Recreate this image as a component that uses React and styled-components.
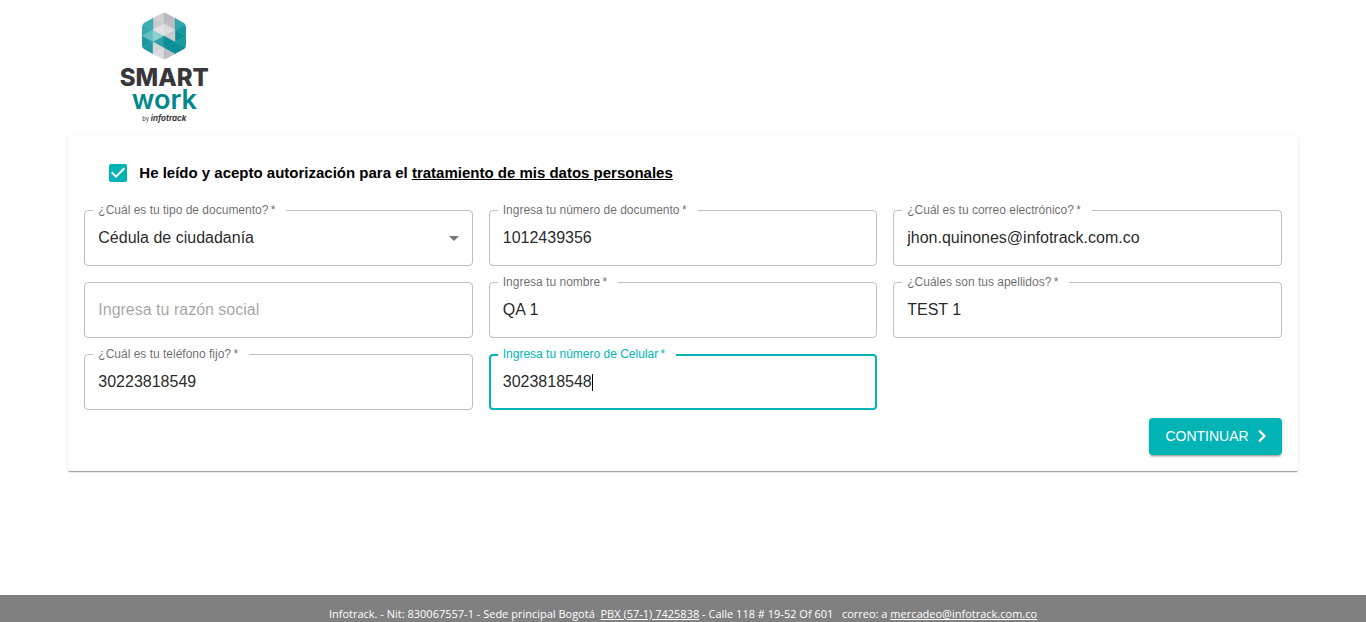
import React from 'react';
import styled, { createGlobalStyle } from 'styled-components';

const TEAL = '#00b4b6';
const INK = 'rgba(0, 0, 0, 0.87)';
const SANS = '"Liberation Sans", Arial, sans-serif';

const GlobalStyle = createGlobalStyle`
  *, *::before, *::after { box-sizing: border-box; }
  body { margin: 0; background: #fff; color: #000; font-family: ${SANS}; }
`;

const Page = styled.div`
  min-height: 100vh;
  display: flex;
  flex-direction: column;
`;

const Header = styled.header`
  width: 90%;
  margin: 0 auto;
  padding: 12px 52px;
  display: flex;
`;

const Brand = styled.div`
  display: flex;
  flex-direction: column;
  align-items: center;
  width: 88px;
  font-family: Inter, sans-serif;
`;

const BrandSmart = styled.span`
  margin-top: 6px;
  font-size: 24px;
  line-height: 24px;
  font-weight: 800;
  color: #38363b;
`;

const BrandWork = styled.span`
  font-size: 27px;
  line-height: 20px;
  font-weight: 600;
  color: #00888c;
`;

const BrandBy = styled.span`
  margin-top: 3px;
  font-size: 6px;
  line-height: 10px;
  color: #38363b;

  em {
    font-size: 8px;
    font-weight: 700;
  }
`;

const Card = styled.form`
  width: 90%;
  margin: 0 auto 32px;
  padding: 16px;
  border-radius: 1px;
  background: #fff;
  box-shadow: 0 2px 1px -1px rgba(0, 0, 0, 0.2), 0 1px 1px rgba(0, 0, 0, 0.14),
    0 1px 3px rgba(0, 0, 0, 0.12);
`;

const Consent = styled.div`
  display: flex;
  align-items: center;
  gap: 12px;
  height: 42px;
  padding-left: 25px;
  margin-bottom: 16px;
  font-size: 15px;
  line-height: 24px;
  font-weight: 700;
`;

const TickBox = styled.span`
  display: grid;
  width: 18px;
  height: 18px;

  > * {
    grid-area: 1 / 1;
  }

  input {
    appearance: none;
    width: 18px;
    height: 18px;
    margin: 0;
    border: 2px solid #757575;
    border-radius: 2px;
  }

  input:checked {
    border-color: ${TEAL};
    background: ${TEAL};
  }

  svg {
    pointer-events: none;
  }
`;

const TextLink = styled.a`
  color: inherit;
  text-decoration: underline;
`;

const Fields = styled.div`
  display: grid;
  grid-template-columns: repeat(3, minmax(0, 1fr));
  gap: 16px;
`;

const Outline = styled.fieldset`
  display: flex;
  min-width: 0;
  height: 56px;
  margin: 0;
  padding: 0 8px;
  border: 1px solid rgba(0, 0, 0, 0.25);
  border-radius: 4px;

  &:focus-within {
    padding: 0 7px;
    border: 2px solid ${TEAL};
  }
`;

const Legend = styled.legend`
  height: 1px;
  padding: 0 11px 0 5px;
  font-size: 12px;
  line-height: 1px;
  color: rgba(0, 0, 0, 0.6);
  white-space: nowrap;

  ${Outline}:focus-within & {
    height: 2px;
    color: ${TEAL};
  }
`;

const Control = styled.div`
  flex: 1;
  display: flex;
  align-items: center;
  min-width: 0;
  padding: 0 5px;

  input,
  select {
    flex: 1;
    min-width: 0;
    padding: 0;
    border: 0;
    outline: 0;
    appearance: none;
    background: transparent;
    color: ${INK};
    font: 16px/24px ${SANS};
  }

  input:focus {
    flex: none;
    field-sizing: content;
    caret-color: transparent;
  }

  input::placeholder {
    color: rgba(0, 0, 0, 0.38);
    opacity: 1;
  }
`;

const Caret = styled.span`
  display: none;
  width: 1px;
  height: 17px;
  background: #000;

  input:focus + & {
    display: block;
  }
`;

const Actions = styled.div`
  display: flex;
  justify-content: flex-end;
  margin-top: 8px;
`;

const SubmitButton = styled.button`
  display: flex;
  align-items: center;
  gap: 5px;
  padding: 6px 12px 7px 16px;
  border: 0;
  border-radius: 4px;
  background: ${TEAL};
  color: #fff;
  font: 14px/24px ${SANS};
  text-transform: uppercase;
  box-shadow: 0 3px 1px -2px rgba(0, 0, 0, 0.2), 0 2px 2px rgba(0, 0, 0, 0.14),
    0 1px 5px rgba(0, 0, 0, 0.12);
`;

const Footer = styled.footer`
  margin-top: auto;
  padding: 11px 16px 0;
  background: #808080;
  color: #fff;
  font-family: "Open Sans", sans-serif;
  font-size: 11px;
  line-height: 16px;
  text-align: center;
  white-space: pre-wrap;
`;

const facets = [
  ['#d0d0d4', '22,0 11,6 22,12'],
  ['#b8b8be', '22,0 33,6 22,12'],
  ['#cbcbd0', '11,6 22,12 11,18'],
  ['#bdbdc3', '33,6 22,12 33,18'],
  ['#3fadb3', '0,12 11,6 11,18'],
  ['#35a5ac', '44,12 33,6 33,18'],
  ['#38a8af', '0,12 11,18 0,24'],
  ['#1b99a1', '44,12 33,18 44,24'],
  ['#e3e3e6', '22,12 11,18 22,24'],
  ['#dadade', '22,12 33,18 22,24'],
  ['#66bfc3', '0,24 11,18 11,30'],
  ['#0a8f98', '44,24 33,18 33,30'],
  ['#8fcfd2', '11,18 22,24 11,30'],
  ['#c9c9ce', '33,18 22,24 33,30'],
  ['#1b99a1', '0,24 11,30 0,36'],
  ['#1b99a1', '44,24 33,30 44,36'],
  ['#2a9fa6', '22,24 11,30 22,36'],
  ['#0a8f98', '22,24 33,30 22,36'],
  ['#1b99a1', '0,36 11,30 11,42'],
  ['#0a8f98', '44,36 33,30 33,42'],
  ['#d4d4d8', '11,30 22,36 11,42'],
  ['#0a8f98', '33,30 22,36 33,42'],
  ['#dcdce0', '22,36 11,42 22,48'],
  ['#bdbdc3', '22,36 33,42 22,48'],
];

function Hexagon() {
  return (
    <svg width="44" height="48" viewBox="0 0 44 48" aria-hidden="true">
      <clipPath id="hex">
        <path d="M19 1.6Q22 0 25 1.6L41 10.3Q44 12 44 15V33Q44 36 41 37.7L25 46.4Q22 48 19 46.4L3 37.7Q0 36 0 33V15Q0 12 3 10.3Z" />
      </clipPath>
      <g clipPath="url(#hex)">
        {facets.map(([fill, points]) => (
          <polygon key={points} fill={fill} stroke={fill} strokeWidth="0.4" points={points} />
        ))}
      </g>
    </svg>
  );
}

const DropArrow = styled.svg`
  flex: none;
  margin-right: -7px;
  pointer-events: none;
`;

function Field({ id, label, required, children }) {
  return (
    <Outline>
      {label && (
        <Legend>
          <label htmlFor={id}>
            {label}
            {required && '\u2009*'}
          </label>
        </Legend>
      )}
      <Control>{children}</Control>
    </Outline>
  );
}

export default function App() {
  return (
    <Page>
      <GlobalStyle />
      <Header>
        <Brand>
          <Hexagon />
          <BrandSmart>SMART</BrandSmart>
          <BrandWork>work</BrandWork>
          <BrandBy>by <em>infotrack</em></BrandBy>
        </Brand>
      </Header>
      <Card>
        <Consent>
          <TickBox>
            <input id="consent" type="checkbox" defaultChecked />
            <svg width="18" height="18" viewBox="3 3 18 18" aria-hidden="true">
              <path fill="#fff" d="M10 17l-5-5 1.41-1.41L10 14.17l7.59-7.59L19 8l-9 9z" />
            </svg>
          </TickBox>
          <label htmlFor="consent">
            He leído y acepto autorización para el{' '}
            <TextLink href="#datos">tratamiento de mis datos personales</TextLink>
          </label>
        </Consent>
        <Fields>
          <Field id="tipo" label="¿Cuál es tu tipo de documento?" required>
            <select id="tipo"><option>Cédula de ciudadanía</option></select>
            <DropArrow width="24" height="24" viewBox="0 0 24 24" aria-hidden="true">
              <path d="M7 10l5 5 5-5z" fill="#757575" />
            </DropArrow>
          </Field>
          <Field id="doc" label="Ingresa tu número de documento" required>
            <input id="doc" defaultValue="1012439356" />
          </Field>
          <Field id="correo" label="¿Cuál es tu correo electrónico?" required>
            <input id="correo" type="email" defaultValue="jhon.quinones@infotrack.com.co" />
          </Field>
          <Field id="razon">
            <input id="razon" aria-label="Ingresa tu razón social" placeholder="Ingresa tu razón social" />
          </Field>
          <Field id="nombre" label="Ingresa tu nombre" required>
            <input id="nombre" defaultValue="QA 1" />
          </Field>
          <Field id="apellidos" label="¿Cuáles son tus apellidos?" required>
            <input id="apellidos" defaultValue="TEST 1" />
          </Field>
          <Field id="fijo" label="¿Cuál es tu teléfono fijo?" required>
            <input id="fijo" type="tel" defaultValue="30223818549" />
          </Field>
          <Field id="celular" label="Ingresa tu número de Celular" required>
            <input id="celular" type="tel" defaultValue="3023818548" autoFocus />
            <Caret />
          </Field>
        </Fields>
        <Actions>
          <SubmitButton type="button">
            Continuar
            <svg width="16" height="16" viewBox="0 0 16 16" aria-hidden="true">
              <path d="M5 2.5l5.5 5.5L5 13.5" fill="none" stroke="#fff" strokeWidth="2.2" />
            </svg>
          </SubmitButton>
        </Actions>
      </Card>
      <Footer>
        Infotrack. - Nit: 830067557-1 - Sede principal Bogotá{'  '}
        <TextLink href="#pbx">PBX (57-1) 7425838</TextLink>
        {' '}- Calle 118 # 19-52 Of 601{'   '}correo: a{' '}
        <TextLink href="#correo">mercadeo@infotrack.com.co</TextLink>
      </Footer>
    </Page>
  );
}
